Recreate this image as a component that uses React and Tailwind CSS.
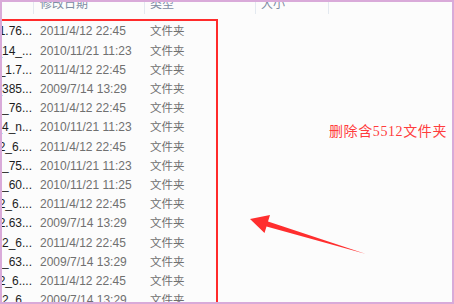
const rows = [
  ["5512_1.76...", "2011/4/12 22:45"],
  ["5512_14_...", "2010/11/21 11:23"],
  ["5512_1.7...", "2011/4/12 22:45"],
  ["5512_385...", "2009/7/14 13:29"],
  ["5512_76...", "2011/4/12 22:45"],
  ["5512_4_n...", "2010/11/21 11:23"],
  ["5512_6....", "2011/4/12 22:45"],
  ["5512_75...", "2010/11/21 11:23"],
  ["5512_60...", "2010/11/21 11:25"],
  ["5512_6....", "2011/4/12 22:45"],
  ["5512.63...", "2009/7/14 13:29"],
  ["5512_6...", "2011/4/12 22:45"],
  ["5512_63...", "2009/7/14 13:29"],
  ["5512_6....", "2011/4/12 22:45"],
  ["5512_6...", "2009/7/14 13:29"],
];

const Row = ({ name, date }) => (
  <div className="flex h-[19.2px] items-center leading-[19px]">
    <div className="flex w-[30px] justify-end overflow-hidden whitespace-nowrap text-[#1c1c1c]">
      {name}
    </div>
    <div className="w-[114px] pl-[8px] text-[#707070]">{date}</div>
    <div className="pl-[4px] text-[11.5px] text-[#707070]">文件夹</div>
  </div>
);

export default function App() {
  return (
    <div className="relative h-[304px] w-[454px] overflow-hidden border-2 border-[#d9aad9] bg-[#fcfcfc] font-['Liberation_Sans','Noto_Sans_CJK_SC',sans-serif] text-[12px]">
      <div className="flex h-[12px] overflow-hidden text-[12px] leading-[12px] text-[#7d8ca3]">
        <div className="w-[32px] border-r border-[#e3e9f0]"></div>
        <div className="w-[111px] border-r border-[#e3e9f0] pl-[6px]">
          <span className="-mt-[4px] block">修改日期</span>
        </div>
        <div className="w-[111px] border-r border-[#e3e9f0] pl-[5px]">
          <span className="-mt-[4px] block">类型</span>
        </div>
        <div className="w-[73px] border-r border-[#e3e9f0] pl-[5px]">
          <span className="-mt-[4px] block">大小</span>
        </div>
      </div>

      <div className="mt-[8.4px]">
        {rows.map((r, i) => (
          <Row key={i} name={r[0]} date={r[1]} />
        ))}
      </div>

      {/* red highlight box */}
      <div className="absolute left-[-10px] top-[17px] h-[320px] w-[225.5px] border-[2.5px] border-[#ff2b2b]"></div>

      <div className="absolute left-[327px] top-[120px] whitespace-nowrap font-['Liberation_Serif','Noto_Sans_CJK_SC',serif] text-[14px] leading-[20px] tracking-[0.6px] text-[#ff3d3d]">
        删除含5512文件夹
      </div>

      <svg className="absolute left-[-2px] top-[-2px]" width="454" height="304" viewBox="0 0 454 304">
        <polygon
          points="250,219 270,215 268,221.5 366,254 266.5,226.5 264.5,233"
          fill="#ff2e2e"
        />
      </svg>
    </div>
  );
}
